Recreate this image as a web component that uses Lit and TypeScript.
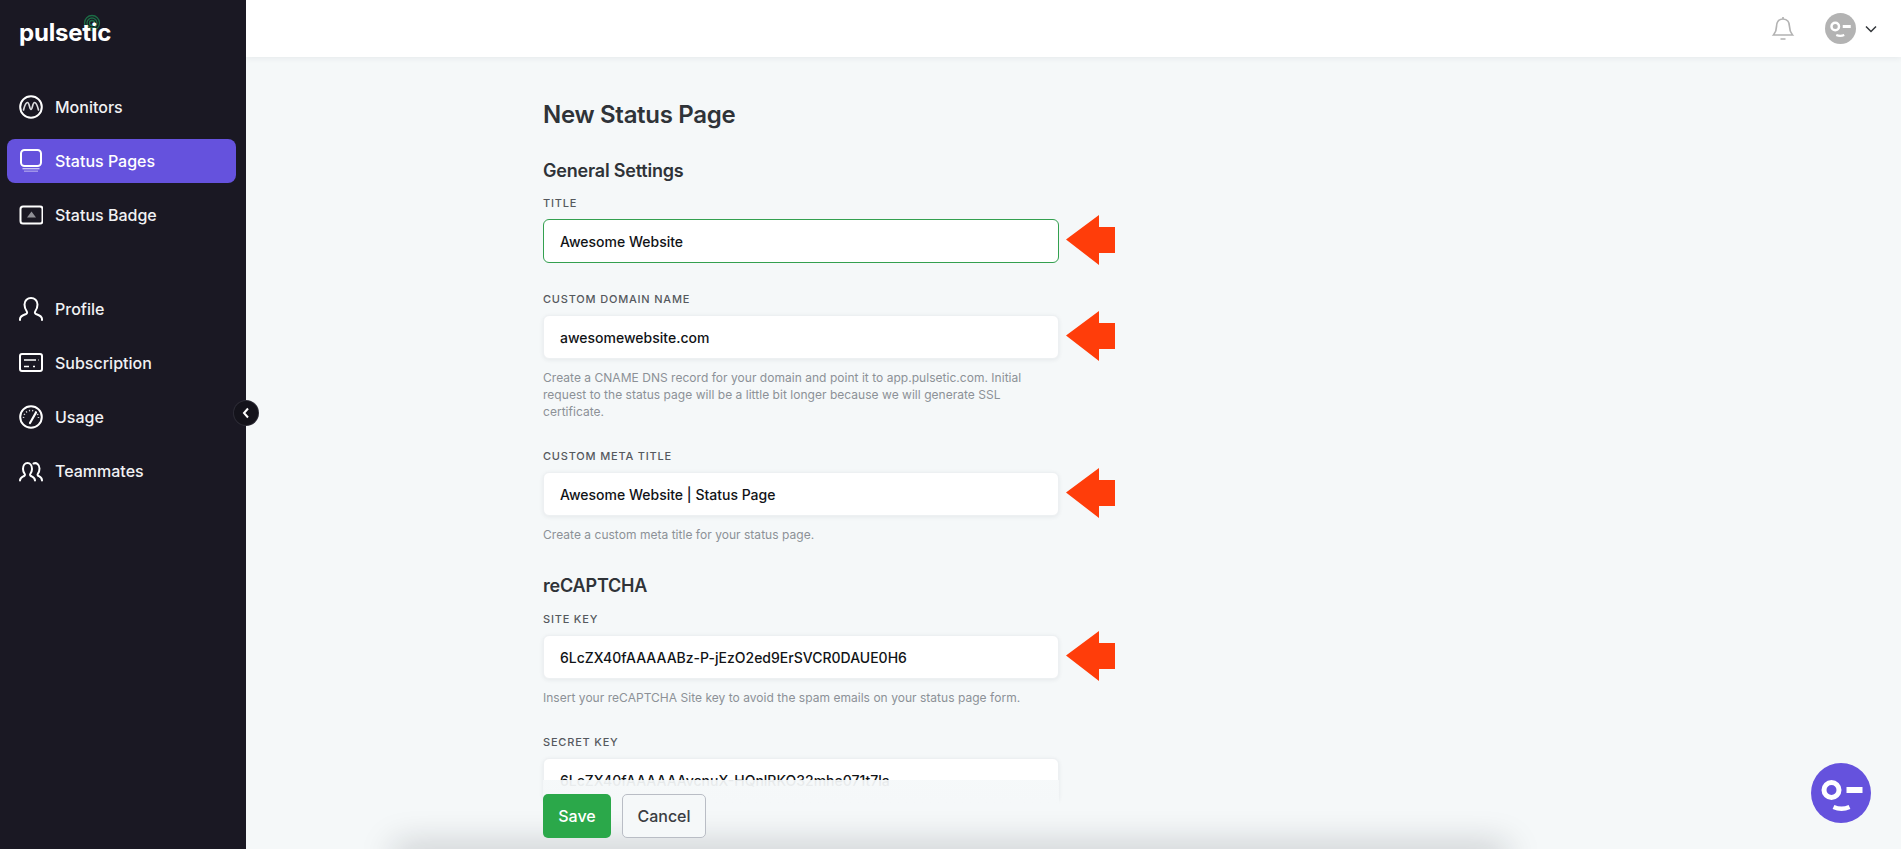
import {LitElement, html, css, svg} from 'lit';
import {customElement} from 'lit/decorators.js';

const faceIcon = (fg: string) => svg`
  <circle cx="20.500" cy="27" r="7.500" fill="none" stroke="${fg}" stroke-width="5"/>
  <rect x="35.500" y="24" width="16" height="6" fill="${fg}"/>
  <path d="M22.500 44q8 3.500 16 0" fill="none" stroke="${fg}" stroke-width="4.500"/>
`;

const navTop = [
  {
    label: 'Monitors',
    active: false,
    icon: svg`<circle cx="12" cy="12" r="10.800"/><path d="M4.500 15C6 9 7 7.500 8.500 7.500c2 0 2 7 3.500 7s1.500-7 3.500-7c1.500 0 2.500 1.500 4 7.500" stroke-width="1.700" stroke="#dcdcdf"/>`,
  },
  {
    label: 'Status Pages',
    active: true,
    icon: svg`<rect x="2" y="1" width="20" height="16" rx="3.500"/><path d="M3.500 19.700h17" stroke-width="1.300" stroke-linecap="butt" opacity=".7"/><path d="M5 22.200h14" stroke-width="1.300" stroke-linecap="butt" opacity=".45"/>`,
  },
  {
    label: 'Status Badge',
    active: false,
    icon: svg`<rect x="1.500" y="3.500" width="22" height="17" rx="2.500"/><path d="M12.500 8.500l4.500 6H8z" fill="#8f8f96" stroke="none"/>`,
  },
];

const navBottom = [
  {
    label: 'Profile',
    icon: svg`<path d="M1 23v-1c0-3 3-4 6-5 1-.4 1.500-1.500.8-2.500C6 12 5.500 9.500 5.500 7.500 5.500 3.500 8.500 1 12 1s6.500 2.500 6.500 6.500c0 2-.5 4.500-2.300 7-.7 1-.2 2.100.8 2.500 3 1 6 2 6 5v1"/>`,
  },
  {
    label: 'Subscription',
    icon: svg`<rect x="1" y="3" width="22" height="17" rx="2"/><path d="M5 9h12M19 9h.5M5 15.500h5M14 15.500h2" stroke-width="1.500" stroke-linecap="butt"/>`,
  },
  {
    label: 'Usage',
    icon: svg`<circle cx="12" cy="12" r="10.800"/><path d="M11 18l6-10.500" stroke-width="2.200"/><path d="M4.500 13a7.500 7.500 0 0 1 15 0" stroke-width="1.500" stroke-linecap="butt" stroke-dasharray="1.200 2" opacity=".8"/>`,
  },
  {
    label: 'Teammates',
    icon: svg`<path d="M1 21.500c0-3 2-3.500 4-4.500 1-.5 1.200-1.300.6-2.200C4.400 13 4 11.500 4 10 4 6.500 6 4 8.500 4S13 6.500 13 10c0 1.500-.4 3-1.600 4.800-.6.900-.4 1.700.6 2.200 2 1 4 1.500 4 4.500"/><path d="M14.500 4.500c2.800-1.200 6 .8 6 5 0 1.800-.4 3.500-1.600 5.300-.6.900-.4 1.700.6 2.200 2 1 3.500 1.500 3.500 4.500"/>`,
  },
];

@customElement('app-root')
export class AppRoot extends LitElement {
  static override styles = css`
    :host {
      display: flex;
      height: 100vh;
      overflow: hidden;
      position: relative;
      background: #f5f8f9;
      font-family: Inter, sans-serif;
      color: #2f3338;
    }

    .sidebar {
      width: 246px;
      flex: none;
      background: #1a1823;
      color: #fff;
      padding: 0 10px 0 7px;
      box-sizing: border-box;
      position: relative;
      z-index: 2;
    }

    .logo {
      display: inline-block;
      position: relative;
      margin: 17px 0 0 12px;
      font-size: 24px;
      line-height: 32px;
      font-weight: 700;
      letter-spacing: -0.2px;
    }

    .logo svg {
      position: absolute;
      left: 64px;
      top: -3px;
      width: 18px;
      height: 18px;
    }

    .logo span {
      position: relative;
    }

    .nav {
      display: flex;
      flex-direction: column;
      gap: 10px;
    }

    .nav.top {
      margin-top: 36px;
    }

    .nav.bottom {
      margin-top: 50px;
    }

    .item {
      display: flex;
      align-items: center;
      gap: 12px;
      height: 44px;
      padding-left: 12px;
      border-radius: 8px;
      font-size: 16px;
      font-weight: 500;
      color: #f1f1f3;
    }

    .item.active {
      background: #6552dd;
      color: #fff;
    }

    .item svg {
      width: 24px;
      height: 24px;
      fill: none;
      stroke: #fff;
      stroke-width: 2;
      stroke-linecap: round;
      stroke-linejoin: round;
      flex: none;
    }

    .collapse {
      position: absolute;
      left: 234px;
      top: 401px;
      width: 24px;
      height: 24px;
      border-radius: 50%;
      background: #14131b;
      box-shadow: 0 0 0 1px #2c2b35;
      z-index: 3;
      display: flex;
      align-items: center;
      justify-content: center;
    }

    .collapse svg {
      width: 10px;
      height: 12px;
      fill: none;
      stroke: #fff;
      stroke-width: 2;
    }

    .main {
      flex: 1;
      display: flex;
      flex-direction: column;
      min-width: 0;
    }

    .header {
      height: 57px;
      flex: none;
      background: #fff;
      box-shadow: 0 1px 6px rgba(40, 50, 60, 0.08);
      display: flex;
      align-items: center;
      justify-content: flex-end;
      padding-right: 24px;
      position: relative;
      z-index: 1;
    }

    .bell {
      width: 24px;
      height: 26px;
      fill: none;
      stroke: #b3b3b3;
      stroke-width: 1.700;
      margin-right: 30px;
    }

    .avatar {
      width: 31px;
      height: 31px;
    }

    .chevron {
      width: 12px;
      height: 8px;
      fill: none;
      stroke: #33363a;
      stroke-width: 1.500;
      margin-left: 9px;
    }

    .content {
      flex: 1;
      overflow: hidden;
      padding: 42px 0 0 297px;
    }

    .form {
      width: 516px;
    }

    h1 {
      margin: 0 0 28px;
      font-size: 24px;
      line-height: 32px;
      font-weight: 600;
      letter-spacing: -0.3px;
      color: #2f3338;
    }

    h2 {
      margin: 0 0 13px;
      font-size: 18px;
      line-height: 24px;
      font-weight: 600;
      letter-spacing: -0.2px;
      color: #2f3338;
    }

    h2.first {
      margin-bottom: 12px;
    }

    .field {
      margin-bottom: 28px;
    }

    .field.last-general {
      margin-bottom: 31px;
    }

    label {
      display: block;
      margin-bottom: 8px;
      font-size: 11px;
      line-height: 16px;
      font-weight: 500;
      letter-spacing: 0.8px;
      text-transform: uppercase;
      color: #55595e;
    }

    .input {
      position: relative;
      height: 44px;
      box-sizing: border-box;
      display: flex;
      align-items: center;
      padding: 0 16px;
      background: #fff;
      border: 1px solid #edf0f2;
      border-radius: 6px;
      box-shadow: 0 1px 4px rgba(40, 50, 60, 0.08);
      font-size: 14px;
      font-weight: 500;
      color: #111316;
    }

    .input.focused {
      border-color: #33a04f;
      box-shadow: none;
    }

    .arrow {
      position: absolute;
      left: 522px;
      top: -5px;
      width: 50px;
      height: 50px;
      fill: #ff3d0a;
    }

    .help {
      margin: 10px 0 0;
      font-size: 12px;
      line-height: 17px;
      letter-spacing: 0.03px;
      color: #8c9197;
    }

    .actions {
      position: absolute;
      left: 543px;
      bottom: 11px;
      display: flex;
      gap: 11px;
      z-index: 1;
    }

    .fade {
      position: absolute;
      left: 543px;
      top: 780px;
      width: 516px;
      height: 24px;
      background: linear-gradient(rgba(245, 248, 249, 0.93), #f5f8f9);
    }

    .fade-fill {
      position: absolute;
      left: 246px;
      right: 0;
      top: 804px;
      bottom: 0;
      background: #f5f8f9;
    }

    .floor {
      position: absolute;
      left: 400px;
      right: 400px;
      bottom: -14px;
      height: 12px;
      box-shadow: 0 0 34px 6px rgba(20, 25, 30, 0.22);
    }

    button {
      height: 44px;
      border-radius: 5px;
      font-family: inherit;
      font-size: 16px;
      font-weight: 500;
      padding: 0;
      box-sizing: border-box;
    }

    .save {
      width: 68px;
      background: #2ba84a;
      border: none;
      color: #fff;
    }

    .cancel {
      width: 84px;
      background: #f5f8f9;
      border: 1px solid #b9bdc5;
      color: #3a3d42;
    }

    .chat {
      position: absolute;
      left: 1811px;
      top: 763px;
      width: 60px;
      height: 60px;
      z-index: 2;
    }
  `;

  private arrow() {
    return html`<svg class="arrow" viewBox="0 0 50 50">
      <path d="M0 24.500L33 0V12H49V38H33V50Z" />
    </svg>`;
  }

  private navItem(label: string, icon: unknown, active = false) {
    return html`<div class="item ${active ? 'active' : ''}">
      <svg viewBox="0 0 24 24">${icon}</svg>
      ${label}
    </div>`;
  }

  override render() {
    return html`
      <aside class="sidebar">
        <div class="logo">
          <svg viewBox="0 0 18 18" fill="none" stroke="#1c6b45" stroke-width="1.300">
            <circle cx="9" cy="9" r="2.500" />
            <circle cx="9" cy="9" r="5" />
            <circle cx="9" cy="9" r="7.500" />
          </svg>
          <span>pulsetic</span>
        </div>
        <nav class="nav top">
          ${navTop.map((n) => this.navItem(n.label, n.icon, n.active))}
        </nav>
        <nav class="nav bottom">
          ${navBottom.map((n) => this.navItem(n.label, n.icon))}
        </nav>
      </aside>
      <div class="collapse">
        <svg viewBox="0 0 10 12"><path d="M7 1.500L3 6l4 4.500" /></svg>
      </div>

      <div class="main">
        <header class="header">
          <svg class="bell" viewBox="0 0 24 26">
            <path d="M12 3c-4.500 0-6.500 3.500-6.500 7.500 0 4-1 6-3 8.500h19c-2-2.500-3-4.500-3-8.500C18.500 6.500 16.500 3 12 3z" />
            <path d="M12 1v2M9.500 23h5" />
          </svg>
          <svg class="avatar" viewBox="0 0 62 62">
            <circle cx="31" cy="31" r="31" fill="#b3b3b3" />
            ${faceIcon('#fff')}
          </svg>
          <svg class="chevron" viewBox="0 0 12 8"><path d="M1 1.500l5 5 5-5" /></svg>
        </header>

        <section class="content">
          <div class="form">
            <h1>New Status Page</h1>
            <h2 class="first">General Settings</h2>
            <div class="field">
              <label>Title</label>
              <div class="input focused">Awesome Website ${this.arrow()}</div>
            </div>
            <div class="field">
              <label>Custom Domain Name</label>
              <div class="input">awesomewebsite.com ${this.arrow()}</div>
              <p class="help">
                Create a CNAME DNS record for your domain and point it to app.pulsetic.com. Initial
                request to the status page will be a little bit longer because we will generate SSL
                certificate.
              </p>
            </div>
            <div class="field last-general">
              <label>Custom Meta Title</label>
              <div class="input">Awesome Website | Status Page ${this.arrow()}</div>
              <p class="help">Create a custom meta title for your status page.</p>
            </div>
            <h2>reCAPTCHA</h2>
            <div class="field">
              <label>Site Key</label>
              <div class="input">6LcZX40fAAAAABz-P-jEzO2ed9ErSVCR0DAUE0H6 ${this.arrow()}</div>
              <p class="help">Insert your reCAPTCHA Site key to avoid the spam emails on your status page form.</p>
            </div>
            <div class="field">
              <label>Secret Key</label>
              <div class="input">6LcZX40fAAAAAAvcnuX-HQnlRKO32mhe071t7la</div>
            </div>
          </div>
        </section>
      </div>

      <div class="fade"></div>
      <div class="fade-fill"></div>
      <div class="floor"></div>
      <div class="actions">
        <button class="save">Save</button>
        <button class="cancel">Cancel</button>
      </div>
      <svg class="chat" viewBox="0 0 60 60">
        <circle cx="30" cy="30" r="30" fill="#6552dd" />
        ${faceIcon('#fff')}
      </svg>
    `;
  }
}
